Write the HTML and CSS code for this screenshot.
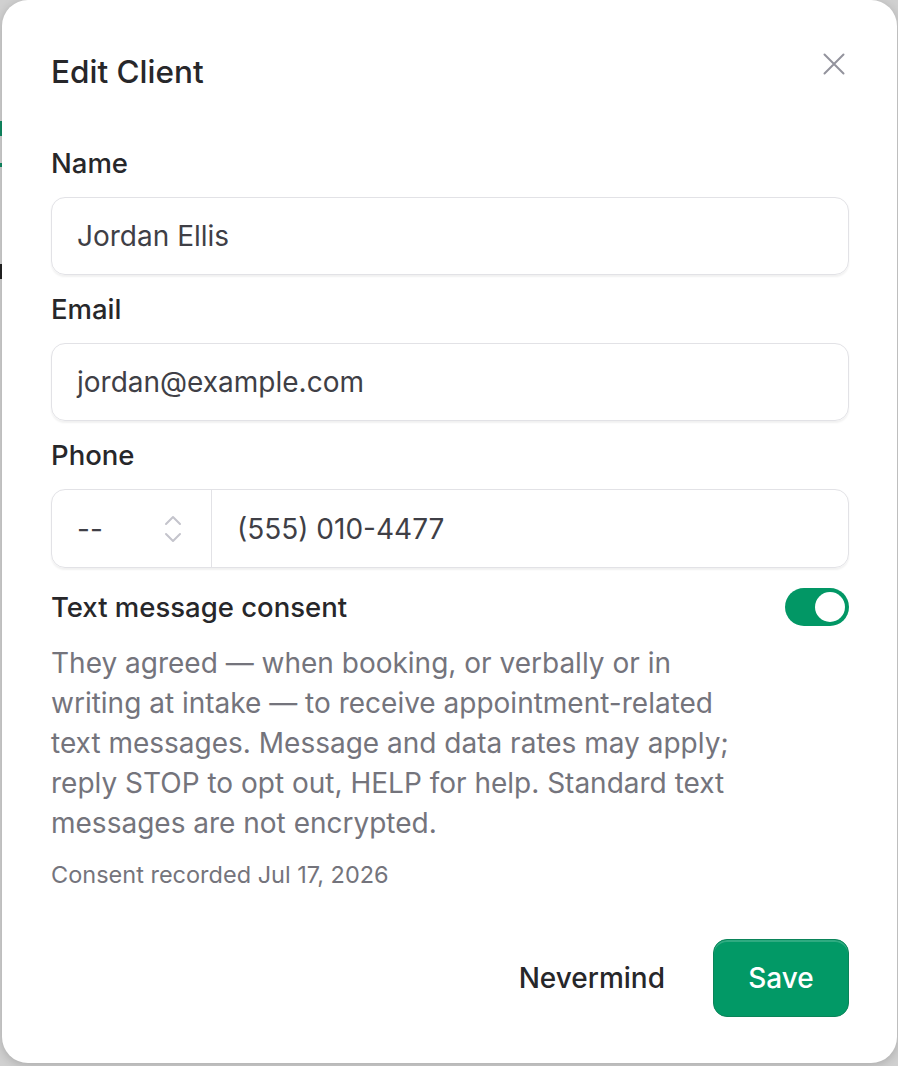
FILE: index.html
```html
<!DOCTYPE html>
<html lang="en">
<head>
<meta charset="utf-8">
<title>Edit Client</title>
<link rel="stylesheet" href="styles.css">
</head>
<body>
<div class="backdrop" aria-hidden="true">
  <span class="peek peek-green-a"></span>
  <span class="peek peek-green-b"></span>
  <span class="peek peek-dark"></span>
</div>
<div class="modal" role="dialog" aria-labelledby="t">
  <div class="header">
    <h2 id="t" class="title">Edit Client</h2>
    <button class="close" aria-label="Close">
      <svg width="22" height="22" viewBox="0 0 22 22" fill="none" stroke="currentColor" stroke-width="2" stroke-linecap="round"><path d="M1.5 1.5L20.5 20.5M20.5 1.5L1.5 20.5"/></svg>
    </button>
  </div>

  <label class="label">Name</label>
  <div class="input"><span class="value">Jordan Ellis</span></div>

  <label class="label">Email</label>
  <div class="input"><span class="value">jordan@example.com</span></div>

  <label class="label">Phone</label>
  <div class="input phone">
    <div class="cc">
      <span class="value">--</span>
      <svg class="updown" width="20" height="30" viewBox="0 0 20 30" fill="none" stroke="currentColor" stroke-width="2" stroke-linecap="round" stroke-linejoin="round"><path d="M3 10L10 3L17 10M3 20L10 27L17 20"/></svg>
    </div>
    <div class="num"><span class="value">(555) 010-4477</span></div>
  </div>

  <div class="consent-row">
    <span class="label consent-label">Text message consent</span>
    <span class="toggle"><span class="knob"></span></span>
  </div>
  <p class="desc">They agreed — when booking, or verbally or in writing at intake — to receive appointment-related text messages. Message and data rates may apply; reply STOP to opt out, HELP for help. Standard text messages are not encrypted.</p>
  <p class="recorded">Consent recorded Jul 17, 2026</p>

  <div class="actions">
    <button class="btn-ghost">Nevermind</button>
    <button class="btn-save">Save</button>
  </div>
</div>
</body>
</html>
```

FILE: styles.css
```css
* { box-sizing: border-box; }
html, body { margin: 0; padding: 0; }
body {
  background: #d0d0d0;
  width: 898px;
  height: 1066px;
  overflow: hidden;
  font-family: "Inter", "Noto Sans", sans-serif;
  position: relative;
}
.backdrop { position: absolute; inset: 0; z-index: 0; }
.peek { position: absolute; left: 0; width: 3px; }
.peek-green-a { top: 121px; height: 15px; background: #0f8a62; }
.peek-green-b { top: 163px; height: 4px; background: #0f8a62; }
.peek-dark { top: 264px; height: 15px; background: #222; }

.modal {
  position: relative;
  z-index: 1;
  margin-left: 2px;
  width: 895px;
  height: 1063px;
  background: #fff;
  border-radius: 26px;
  box-shadow: 0 2px 10px rgba(0,0,0,0.18);
  padding: 52px 48px 0 49px;
  display: flex;
  flex-direction: column;
}
.header {
  display: flex;
  justify-content: space-between;
  align-items: flex-start;
  margin-bottom: 51px;
}
.title {
  margin: 0;
  font-size: 31.5px;
  line-height: 40px;
  font-weight: 500;
  color: #27272a;
}
.close {
  border: 0;
  background: none;
  padding: 0;
  margin: 1px 4px 0 0;
  color: #93939d;
  width: 22px;
  height: 22px;
  cursor: pointer;
}
.close svg { display: block; }

.label {
  display: block;
  font-size: 27.5px;
  line-height: 40px;
  font-weight: 500;
  color: #27272a;
  margin-bottom: 14px;
}
.input {
  height: 78px;
  border: 1.5px solid #e2e2e6;
  border-radius: 14px;
  box-shadow: 0 1.5px 2px rgba(0,0,0,0.06);
  display: flex;
  align-items: center;
  padding-left: 25px;
  margin-bottom: 14px;
}
.value {
  font-size: 28px;
  color: #3f3f46;
}
.phone { padding-left: 0; height: 79px; }
.cc {
  width: 160px;
  height: 100%;
  display: flex;
  align-items: center;
  justify-content: space-between;
  padding: 0 28px 0 25px;
  border-right: 1.5px solid #e2e2e6;
}
.updown { color: #c4c4cc; display: block; }
.num { padding-left: 25px; }

.consent-row {
  display: flex;
  justify-content: space-between;
  align-items: center;
  margin-top: 5px;
}
.consent-label { margin-bottom: 0; }
.toggle {
  width: 64px;
  height: 38px;
  border-radius: 19px;
  background: #029765;
  display: flex;
  align-items: center;
  justify-content: flex-end;
  padding-right: 4px;
}
.knob {
  width: 30px;
  height: 30px;
  border-radius: 50%;
  background: #fff;
}
.desc {
  margin: 16px 0 0;
  max-width: 700px;
  font-size: 28px;
  line-height: 40px;
  color: #74747c;
}
.recorded {
  margin: 16px 0 0;
  font-size: 23.5px;
  line-height: 32px;
  color: #74747c;
}
.actions {
  margin-top: auto;
  margin-bottom: 46px;
  display: flex;
  justify-content: flex-end;
  align-items: center;
  gap: 48px;
}
.btn-ghost {
  border: 0;
  background: none;
  font-family: inherit;
  font-size: 28px;
  font-weight: 500;
  color: #27272a;
  padding: 0;
}
.btn-save {
  width: 136px;
  height: 78px;
  border-radius: 14px;
  border: 1.5px solid #0a8459;
  background: #029966;
  box-shadow: inset 0 2px 0 rgba(255,255,255,0.18);
  color: #fff;
  font-family: inherit;
  font-size: 28px;
  font-weight: 500;
}
```
